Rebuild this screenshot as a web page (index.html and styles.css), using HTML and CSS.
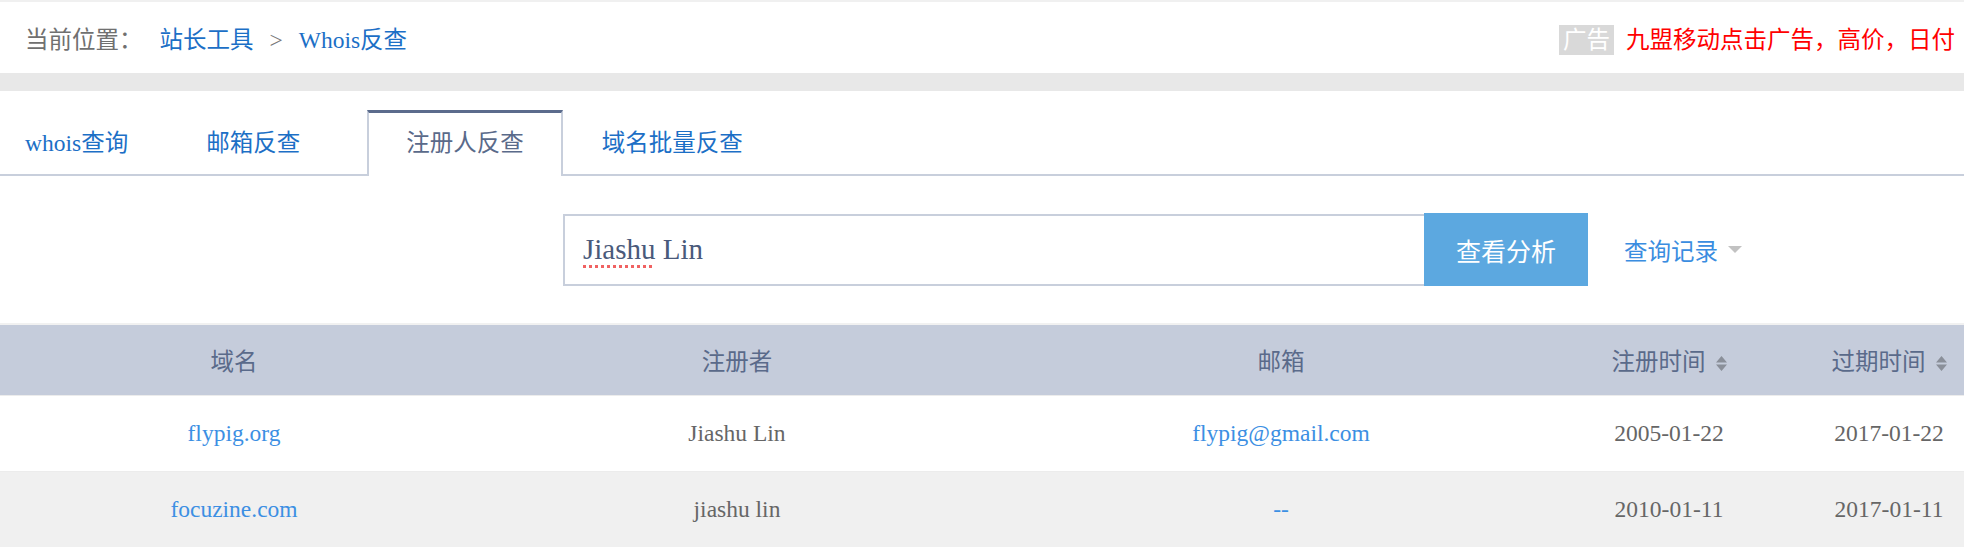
FILE: index.html
```html
<!doctype html>
<html lang="zh-CN">
  <head>
    <meta charset="UTF-8" />
    <meta name="viewport" content="width=device-width, initial-scale=1" />
    <title>Whois反查 - 注册人反查</title>
    <link rel="stylesheet" href="styles.css">
  </head>
  <body>
    <div class="topbar">
      <div class="crumbs">
        <span class="crumbs-label">当前位置：</span>
        <a href="#">站长工具</a>
        <span class="crumbs-sep">&gt;</span>
        <a href="#">Whois反查</a>
      </div>
      <div class="ad">
        <span class="ad-tag">广告</span>
        <a href="#" class="ad-text">九盟移动点击广告，高价，日付</a>
      </div>
    </div>
    <div class="band"></div>

    <ul class="tabs">
      <li class="tab"><a href="#">whois查询</a></li>
      <li class="tab"><a href="#">邮箱反查</a></li>
      <li class="tab active"><a href="#">注册人反查</a></li>
      <li class="tab"><a href="#">域名批量反查</a></li>
    </ul>

    <form class="search" id="searchForm">
      <div class="search-input" contenteditable="true"><span class="misspelt">Jiashu</span> Lin</div>
      <button type="submit">查看分析</button>
      <a href="#" class="history">
        查询记录
        <svg class="caret" width="14" height="7" viewBox="0 0 14 7"><path d="M0 0h14L7 7z" fill="#c2c2c2"/></svg>
      </a>
    </form>

    <table class="results">
      <colgroup>
        <col style="width: 468px">
        <col style="width: 538px">
        <col style="width: 550px">
        <col style="width: 226px">
        <col style="width: 214px">
      </colgroup>
      <thead>
        <tr>
          <th>域名</th>
          <th>注册者</th>
          <th>邮箱</th>
          <th>注册时间<svg class="sort" width="11" height="15" viewBox="0 0 11 15"><path d="M0 6.5L5.5 0 11 6.5z M0 8.5h11L5.5 15z" fill="#8a8f99"/></svg></th>
          <th>过期时间<svg class="sort" width="11" height="15" viewBox="0 0 11 15"><path d="M0 6.5L5.5 0 11 6.5z M0 8.5h11L5.5 15z" fill="#8a8f99"/></svg></th>
        </tr>
      </thead>
      <tbody>
        <tr>
          <td><a href="#">flypig.org</a></td>
          <td>Jiashu Lin</td>
          <td><a href="#">flypig@gmail.com</a></td>
          <td>2005-01-22</td>
          <td>2017-01-22</td>
        </tr>
        <tr>
          <td><a href="#">focuzine.com</a></td>
          <td>jiashu lin</td>
          <td><a href="#">--</a></td>
          <td>2010-01-11</td>
          <td>2017-01-11</td>
        </tr>
      </tbody>
    </table>

    <script>
      document.getElementById('searchForm').addEventListener('submit', (event) => {
        event.preventDefault();
      });
    </script>
  </body>
</html>
```

FILE: styles.css
```css
html,
body {
  overflow: hidden;
}
body {
  margin: 0;
  font-family: "Liberation Serif", "Noto Sans CJK SC", serif;
  font-size: 23.5px;
  color: #666;
  background: #fff;
}
a {
  text-decoration: none;
  color: #1c6fc6;
}
.topbar {
  display: flex;
  align-items: center;
  box-sizing: border-box;
  height: 73px;
  padding: 4px 9px 0 25px;
  border-top: 2px solid #f0f0f0;
  white-space: nowrap;
}
.crumbs {
  display: flex;
  align-items: center;
  gap: 16px;
  line-height: 30px;
}
.crumbs-label {
  color: #707070;
  margin-right: 1px;
}
.crumbs-sep {
  color: #777;
}
.ad {
  margin-left: auto;
  display: flex;
  align-items: center;
  gap: 12px;
  line-height: 30px;
}
.ad-tag {
  background: #d9d9d9;
  color: #fff;
  padding: 0 4px;
  height: 30px;
}
.ad-text {
  color: #ff0000;
}
.band {
  height: 18px;
  background: #e8e8e8;
}
.tabs {
  list-style: none;
  display: flex;
  margin: 19px 0 0;
  padding: 0;
  height: 64px;
  border-bottom: 2px solid #c8cfdc;
}
.tab {
  box-sizing: border-box;
  height: 64px;
  padding: 0 39px;
  line-height: 60px;
  border-top: 3px solid transparent;
}
.tab:first-child {
  padding-left: 25px;
}
.tab.active {
  margin-left: 28px;
  height: 66px;
  padding: 0 37px;
  background: #fff;
  border: 2px solid #c8cfdc;
  border-top: 3px solid #5b6b8c;
  border-bottom: none;
}
.tab a {
  color: #1c6fc6;
}
.tab.active a {
  color: #5a6a8a;
}
.search {
  display: flex;
  align-items: center;
  margin: 37px 0 0;
  padding-left: 563px;
}
.search-input {
  box-sizing: border-box;
  width: 861px;
  height: 72px;
  padding: 0 18px;
  border: 2px solid #c8cfdc;
  border-right: none;
  font-size: 29px;
  line-height: 66px;
  color: #4a5a7b;
  outline: none;
}
.misspelt {
  text-decoration: underline dotted #f06262;
  text-decoration-thickness: 3px;
  text-underline-offset: 6px;
}
button {
  width: 164px;
  height: 73px;
  border: none;
  background: #5ca8e0;
  color: #fff;
  font-family: "Noto Sans CJK SC", sans-serif;
  font-size: 25px;
  cursor: pointer;
}
.history {
  display: flex;
  align-items: center;
  gap: 10px;
  margin-left: 36px;
  color: #3a8de0;
  font-family: "Noto Sans CJK SC", sans-serif;
}
.results {
  table-layout: fixed;
  width: 1996px;
  margin-top: 37px;
  border-collapse: collapse;
  border-top: 2px solid #f1f1f1;
  text-align: center;
}
.results th {
  height: 70px;
  padding: 0;
  background: #c5ccdb;
  color: #5a6a8a;
  font-weight: normal;
}
.sort {
  margin-left: 10px;
  vertical-align: -1px;
}
.results td {
  height: 75px;
  padding: 0;
  border-top: 1px solid #ececec;
  color: #666;
}
.results tbody tr:nth-child(even) td {
  background: #f0f0f0;
}
.results td a {
  color: #3c8fe3;
}
```
